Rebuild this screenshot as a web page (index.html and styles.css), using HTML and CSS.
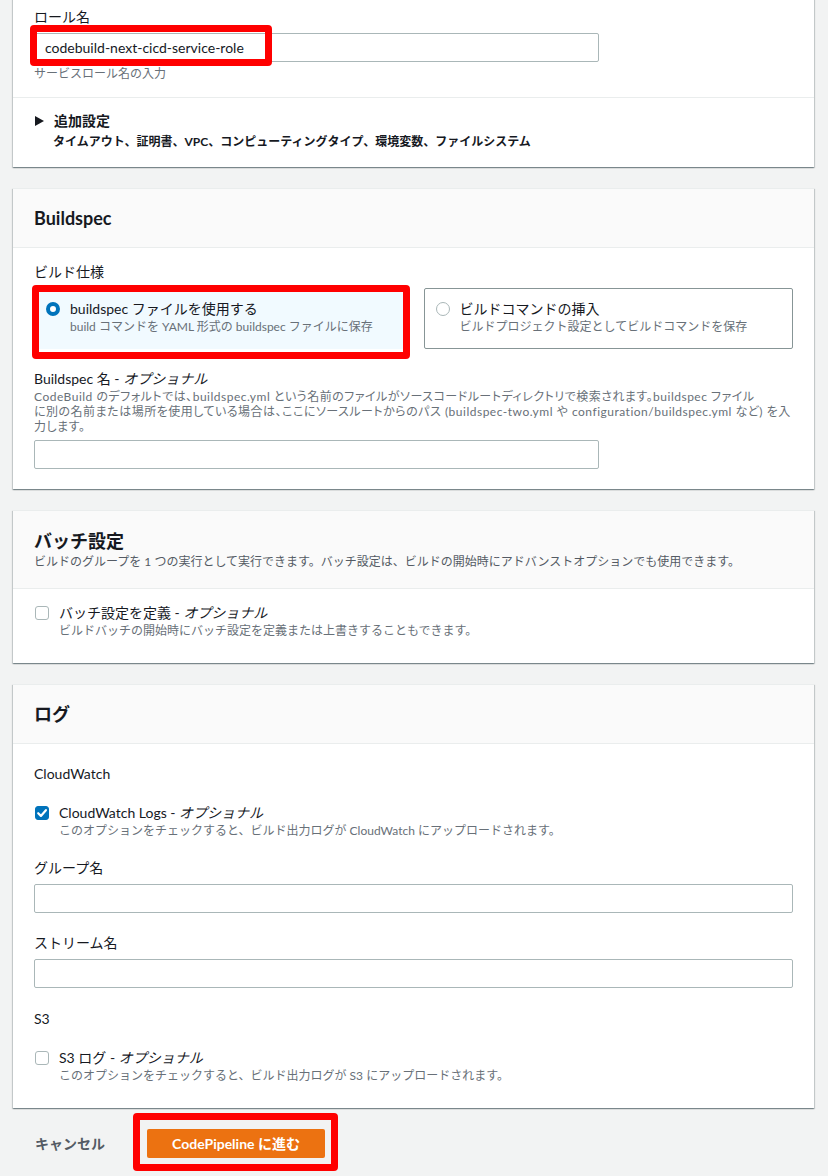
FILE: index.html
```html
<!DOCTYPE html>
<html lang="ja">
<head>
<meta charset="utf-8">
<title>CodeBuild</title>
<link rel="stylesheet" href="styles.css">
</head>
<body>
<main class="page">

  <section class="card card-first">
    <div class="section section-role">
      <div class="label">ロール名</div>
      <div class="field field-half annotated">
        <div class="input">codebuild-next-cicd-service-role</div>
        <div class="mark mark-role"></div>
      </div>
      <div class="hint">サービスロール名の入力</div>
    </div>
    <div class="section section-expand">
      <div class="expand-title"><span class="caret"></span>追加設定</div>
      <div class="expand-sub">タイムアウト、証明書、VPC、コンピューティングタイプ、環境変数、ファイルシステム</div>
    </div>
  </section>

  <section class="card">
    <header class="card-header">
      <h2>Buildspec</h2>
    </header>
    <div class="card-body body-buildspec">
      <div class="label">ビルド仕様</div>
      <div class="tiles">
        <div class="tile tile-selected annotated">
          <span class="radio radio-on"></span>
          <div class="tile-text">
            <div class="tile-title">buildspec ファイルを使用する</div>
            <div class="tile-sub">build コマンドを YAML 形式の buildspec ファイルに保存</div>
          </div>
          <div class="mark mark-tile"></div>
        </div>
        <div class="tile">
          <span class="radio"></span>
          <div class="tile-text">
            <div class="tile-title">ビルドコマンドの挿入</div>
            <div class="tile-sub">ビルドプロジェクト設定としてビルドコマンドを保存</div>
          </div>
        </div>
      </div>
      <div class="label label-spaced">Buildspec 名 - <i>オプショナル</i></div>
      <div class="desc palt">CodeBuild のデフォルトでは、buildspec.yml という名前のファイルがソースコードルートディレクトリで検索されます。buildspec ファイル<br>に別の名前または場所を使用している場合は、ここにソースルートからのパス (buildspec-two.yml や configuration/buildspec.yml など) を入<br>力します。</div>
      <div class="field field-half"><div class="input"></div></div>
    </div>
  </section>

  <section class="card">
    <header class="card-header header-desc">
      <h2>バッチ設定</h2>
      <p class="header-sub">ビルドのグループを 1 つの実行として実行できます。バッチ設定は、ビルドの開始時にアドバンストオプションでも使用できます。</p>
    </header>
    <div class="card-body body-batch">
      <div class="check-row">
        <span class="checkbox"></span>
        <div>
          <div class="check-title">バッチ設定を定義 - <i>オプショナル</i></div>
          <div class="check-sub">ビルドバッチの開始時にバッチ設定を定義または上書きすることもできます。</div>
        </div>
      </div>
    </div>
  </section>

  <section class="card">
    <header class="card-header">
      <h2>ログ</h2>
    </header>
    <div class="card-body body-logs">
      <div class="label">CloudWatch</div>
      <div class="check-row row-gap">
        <span class="checkbox checkbox-on">
          <svg viewBox="0 0 14 14" width="14" height="14"><path d="M3.2 7.2 L5.9 9.9 L10.9 4.2" fill="none" stroke="#fff" stroke-width="2.2" stroke-linecap="round" stroke-linejoin="round"/></svg>
        </span>
        <div>
          <div class="check-title">CloudWatch Logs - <i>オプショナル</i></div>
          <div class="check-sub">このオプションをチェックすると、ビルド出力ログが CloudWatch にアップロードされます。</div>
        </div>
      </div>
      <div class="label row-gap">グループ名</div>
      <div class="field"><div class="input"></div></div>
      <div class="label row-gap-l">ストリーム名</div>
      <div class="field"><div class="input"></div></div>
      <div class="label row-gap-xl">S3</div>
      <div class="check-row row-gap">
        <span class="checkbox"></span>
        <div>
          <div class="check-title">S3 ログ - <i>オプショナル</i></div>
          <div class="check-sub">このオプションをチェックすると、ビルド出力ログが S3 にアップロードされます。</div>
        </div>
      </div>
    </div>
  </section>

  <footer class="actions">
    <span class="cancel">キャンセル</span>
    <div class="annotated">
      <button class="primary" type="button">CodePipeline に進む</button>
      <div class="mark mark-btn"></div>
    </div>
  </footer>

</main>
</body>
</html>
```

FILE: styles.css
```css
* { box-sizing: border-box; }

html, body {
  margin: 0;
  padding: 0;
  background: #f2f3f3;
}

body {
  font-family: Lato, "Noto Sans CJK JP", sans-serif;
  font-size: 14px;
  line-height: 20px;
  color: #16191f;
}

.page {
  width: 828px;
  height: 1176px;
  overflow: hidden;
}

.palt { font-feature-settings: "palt" 1; }

i { font-style: italic; }

/* cards */
.card {
  margin: 0 14px 21px 13px;
  background: #fff;
  border-top: 1px solid #eaeded;
  box-shadow: 0 1px 1px 0 rgba(0, 28, 36, .3),
              1px 1px 1px 0 rgba(0, 28, 36, .15),
              -1px 1px 1px 0 rgba(0, 28, 36, .15);
}

.card-first {
  margin-top: -2px;
  border-top: 0;
}

.section { padding: 0 21px; }

.section-role {
  padding-top: 9px;
  padding-bottom: 15px;
  border-bottom: 1px solid #eaeded;
}

.section-expand {
  padding-top: 13px;
  padding-bottom: 17px;
}

.card-header {
  background: #fafafa;
  border-bottom: 1px solid #eaeded;
  padding: 17px 21px 17px;
}

.card-header h2 {
  margin: 0;
  font-size: 18px;
  line-height: 24px;
  font-weight: 700;
}

.header-desc { padding: 18px 21px 18px; }

.header-sub {
  margin: 1px 0 0;
  font-size: 12px;
  line-height: 16px;
  color: #545b64;
}

.card-body { padding: 14px 21px 20px; }

.body-batch { padding-bottom: 24px; }

.body-logs { padding-top: 20px; padding-bottom: 24px; }

/* labels / fields */
.label { font-size: 14px; line-height: 20px; }

.label-spaced { margin-top: 20px; }

.hint {
  margin-top: 4px;
  font-size: 12px;
  line-height: 16px;
  color: #687078;
}

.field { margin-top: 6px; }

.field-half { width: 565px; }

.input {
  height: 29px;
  border: 1px solid #aab7b8;
  border-radius: 2px;
  background: #fff;
  padding: 0 10px;
  font-size: 14px;
  line-height: 27px;
  color: #16191f;
}

.desc {
  font-size: 12px;
  line-height: 15px;
  letter-spacing: 0.5px;
  white-space: nowrap;
  color: #687078;
}

/* expandable */
.expand-title {
  display: flex;
  align-items: center;
  font-weight: 700;
  font-size: 14px;
  line-height: 20px;
}

.caret {
  width: 0;
  height: 0;
  margin: 0 10px 0 1px;
  border-top: 5px solid transparent;
  border-bottom: 5px solid transparent;
  border-left: 9px solid #16191f;
}

.expand-sub {
  margin-top: 3px;
  padding-left: 19px;
  font-size: 12px;
  line-height: 16px;
  font-weight: 700;
}

/* tiles */
.tiles {
  margin-top: 6px;
  display: grid;
  grid-template-columns: 1fr 1fr;
  gap: 20px;
}

.tile {
  display: flex;
  align-items: flex-start;
  gap: 10px;
  height: 61px;
  padding: 10px 12px 0 11px;
  border: 1px solid #879596;
  border-radius: 2px;
  background: #fff;
}

.tile-selected {
  background: #f1faff;
  border-color: #f1faff;
}

.radio {
  flex: none;
  width: 14px;
  height: 14px;
  margin-top: 3px;
  border-radius: 50%;
  border: 1.5px solid #aab7b8;
  background: #fff;
}

.radio-on {
  border: 4px solid #0073bb;
}

.tile-title { font-size: 14px; line-height: 20px; }

.tile-sub {
  font-size: 12px;
  line-height: 16px;
  color: #687078;
}

/* checkboxes */
.check-row {
  display: flex;
  align-items: flex-start;
  gap: 10px;
}

.checkbox {
  flex: none;
  display: block;
  width: 14px;
  height: 14px;
  margin: 3px 0 0 1px;
  border: 1px solid #aab7b8;
  border-radius: 3px;
  background: #fff;
}

.checkbox-on {
  border-color: #0073bb;
  background: #0073bb;
  position: relative;
}

.checkbox-on svg {
  position: absolute;
  left: -1px;
  top: -1px;
}

.check-title { font-size: 14px; line-height: 20px; }

.check-sub {
  font-size: 12px;
  line-height: 16px;
  color: #687078;
}

.row-gap { margin-top: 19px; }
.row-gap-l { margin-top: 20px; }
.row-gap-xl { margin-top: 21px; }

/* footer */
.actions {
  display: flex;
  align-items: center;
  gap: 42px;
  padding-left: 35px;
  margin-top: 0;
}

.cancel {
  font-weight: 700;
  color: #545b64;
  font-size: 14px;
}

.primary {
  display: block;
  width: 178px;
  height: 29px;
  border: 0;
  border-radius: 2px;
  background: #ec7211;
  color: #fff;
  font-family: Lato, "Noto Sans CJK JP", sans-serif;
  font-size: 14px;
  font-weight: 700;
  line-height: 29px;
  padding: 0;
}

/* annotation marks */
.annotated { position: relative; }

.mark {
  position: absolute;
  border: 7px solid #ff0000;
  border-radius: 4px;
  pointer-events: none;
}

.mark-role {
  left: -4px;
  top: -8px;
  width: 242px;
  height: 41px;
}

.mark-tile {
  left: -3px;
  top: -4px;
  width: 378px;
  height: 74px;
}

.mark-btn {
  left: -14px;
  top: -16px;
  width: 205px;
  height: 58px;
}
```
